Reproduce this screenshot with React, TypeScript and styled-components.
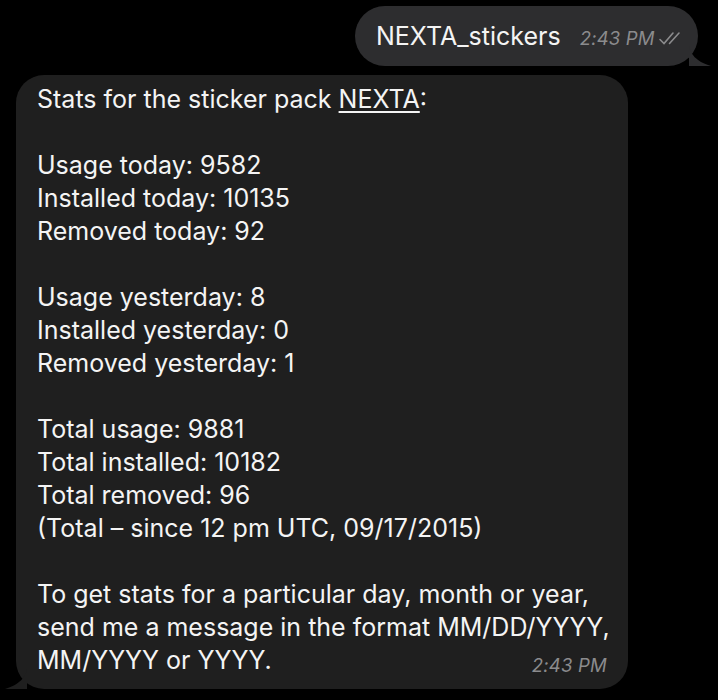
import React from "react";
import styled, { createGlobalStyle } from "styled-components";

const Global = createGlobalStyle`
  html, body { margin: 0; padding: 0; background: #000; }
  body { font-family: Inter, "Noto Sans", sans-serif; -webkit-font-smoothing: antialiased; }
`;

const Screen = styled.div`
  width: 718px;
  height: 700px;
  background: #000;
  display: flex;
  flex-direction: column;
  box-sizing: border-box;
  padding: 6px 20px 0 16px;
  gap: 9px;
  overflow: hidden;
`;

const Row = styled.div<{ $out?: boolean }>`
  display: flex;
  justify-content: ${(p) => (p.$out ? "flex-end" : "flex-start")};
`;

const Bubble = styled.div<{ $out?: boolean }>`
  position: relative;
  box-sizing: border-box;
  background: ${(p) => (p.$out ? "#2d2d2f" : "#1f1f1f")};
  color: #f4f4f4;
  border-radius: ${(p) => (p.$out ? "30px" : "28px")};
  font-size: 25px;
  line-height: 33px;
  letter-spacing: 0;
`;

const OutBubble = styled(Bubble)`
  height: 60px;
  width: 343px;
  padding: 0 0 0 21px;
  display: flex;
  align-items: center;
`;

const InBubble = styled(Bubble)`
  width: 612px;
  padding: 8px 20px 10px 21px;
`;

const Line = styled.div`
  white-space: pre;
  min-height: 33px;
`;

const Link = styled.span`
  text-decoration: underline;
  text-underline-offset: 3px;
  text-decoration-thickness: 1.5px;
`;

const Meta = styled.span`
  display: inline-flex;
  align-items: center;
  gap: 3px;
  font-style: italic;
  font-size: 18.5px;
  color: #8b8b8d;
  letter-spacing: 0.2px;
`;

const OutMeta = styled(Meta)`
  margin-left: 19px;
  margin-top: 4px;
`;

const LastRow = styled.div`
  display: flex;
  justify-content: space-between;
  align-items: baseline;
`;

const InMeta = styled(Meta)`
  margin-right: 1px;
  position: relative;
  top: 3px;
`;

const Tail = styled.svg<{ $out?: boolean }>`
  position: absolute;
  bottom: 0;
  ${(p) => (p.$out ? "right: -13px;" : "left: -11px;")}
`;

const Ticks = () => (
  <svg width="28" height="16" viewBox="0 0 28 16" fill="none" stroke="#8b8b8d" strokeWidth="1.6" strokeLinecap="round">
    <path d="M2 9.5 L6 13.5 L15 3" />
    <path d="M11.5 13.5 L21 3" />
  </svg>
);

const lines: (string | React.ReactNode)[] = [
  "",
  "Usage today: 9582",
  "Installed today: 10135",
  "Removed today: 92",
  "",
  "Usage yesterday: 8",
  "Installed yesterday: 0",
  "Removed yesterday: 1",
  "",
  "Total usage: 9881",
  "Total installed: 10182",
  "Total removed: 96",
  "(Total – since 12 pm UTC, 09/17/2015)",
  "",
  "To get stats for a particular day, month or year,",
  "send me a message in the format MM/DD/YYYY,",
];

export default function App() {
  return (
    <>
      <Global />
      <Screen>
        <Row $out>
          <OutBubble $out>
            <span>NEXTA_stickers</span>
            <OutMeta>
              2:43 PM
              <Ticks />
            </OutMeta>
            <Tail $out width="22" height="20" viewBox="0 0 22 20">
              <path d="M0 0 C2 8 6 15 22 20 L0 20 Z" fill="#2d2d2f" />
            </Tail>
          </OutBubble>
        </Row>
        <Row>
          <InBubble>
            <Line>
              Stats for the sticker pack <Link>NEXTA</Link>:
            </Line>
            {lines.map((l, i) => (
              <Line key={i}>{l}</Line>
            ))}
            <LastRow>
              <span>MM/YYYY or YYYY.</span>
              <InMeta>2:43 PM</InMeta>
            </LastRow>
            <Tail width="22" height="20" viewBox="0 0 22 20">
              <path d="M22 0 C20 8 16 15 0 20 L22 20 Z" fill="#1f1f1f" />
            </Tail>
          </InBubble>
        </Row>
      </Screen>
    </>
  );
}
